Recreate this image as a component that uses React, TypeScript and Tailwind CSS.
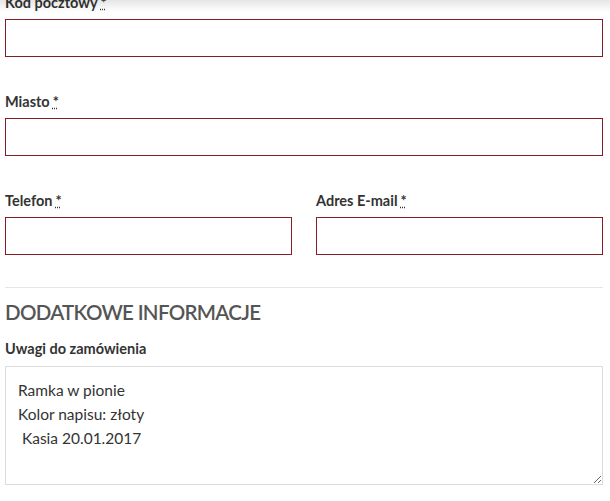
import React from "react";

function Req() {
  return (
    <abbr title="wymagane" className="ml-[3px]">
      *
    </abbr>
  );
}

function Field({ label, required = true }: { label: string; required?: boolean }) {
  return (
    <div className="flex flex-col">
      <label className="text-[14.5px] leading-[20px] font-bold text-[#333]">
        {label}
        {required && <Req />}
      </label>
      <input
        type="text"
        className="mt-[6px] h-[38px] w-full border border-[#861c24] bg-white outline-none"
      />
    </div>
  );
}

export default function App() {
  return (
    <div
      className="relative h-[501px] w-[610px] overflow-hidden bg-white"
      style={{ fontFamily: "Lato, 'Open Sans', sans-serif" }}
    >
      {/* header shadow */}
      <div className="pointer-events-none absolute inset-x-0 top-0 h-[12px] bg-gradient-to-b from-black/10 to-transparent" />

      <div className="ml-[5px] mt-[-7px] flex w-[598px] flex-col">
        <Field label="Kod pocztowy" />
        <div className="mt-[35px]">
          <Field label="Miasto" />
        </div>
        <div className="mt-[35px] grid grid-cols-2 gap-x-[24px]">
          <Field label="Telefon" />
          <Field label="Adres E-mail" />
        </div>

        <hr className="mt-[32px] border-t border-[#e6e6e6]" />

        <h3 className="mt-[10px] text-[20.5px] leading-[28px] font-semibold tracking-[-0.7px] text-[#555]">
          DODATKOWE INFORMACJE
        </h3>

        <label className="mt-[13px] text-[14.5px] leading-[20px] font-bold text-[#333]">
          Uwagi do zamówienia
        </label>
        <textarea
          className="mt-[7px] h-[119px] w-full border border-[#dcdcdc] bg-white pl-[12px] pt-[11px] text-[15.5px] leading-[24px] text-[#333] outline-none"
          defaultValue={"Ramka w pionie\nKolor napisu: złoty\n Kasia 20.01.2017"}
        />
      </div>
    </div>
  );
}
